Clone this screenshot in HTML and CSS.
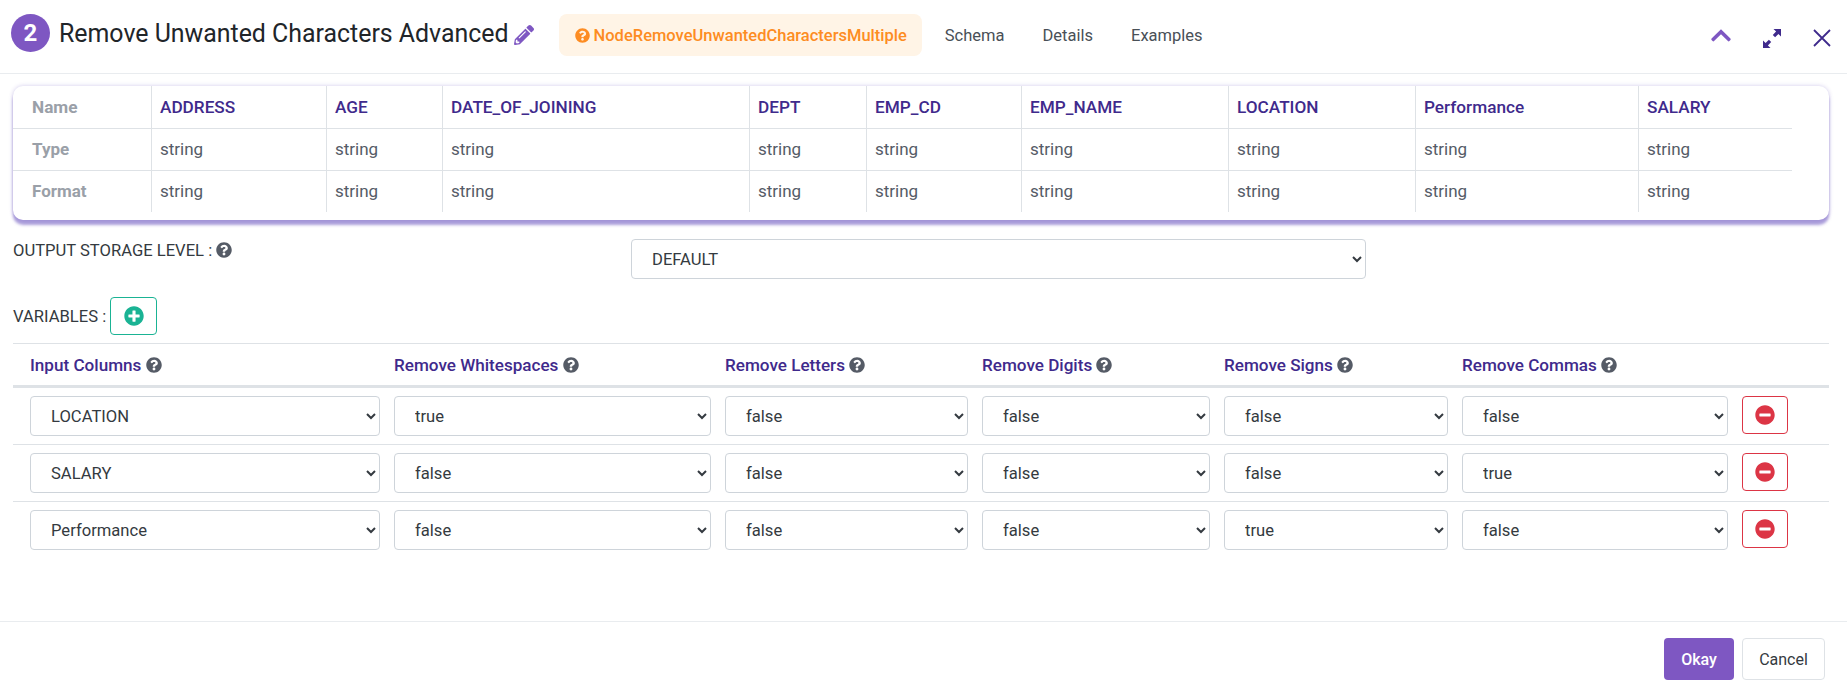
FILE: index.html
```html
<!DOCTYPE html>
<html>
<head>
  <meta charset="utf-8" />
  <title>Remove Unwanted Characters Advanced</title>
  <link rel="stylesheet" href="styles.css">
</head>
<body>
  <svg class="sprites" xmlns="http://www.w3.org/2000/svg">
    <symbol id="i-question" viewBox="0 0 512 512"><path d="M504 256c0 136.997-111.043 248-248 248S8 392.997 8 256C8 119.083 119.043 8 256 8s248 111.083 248 248zM262.655 90c-54.497 0-89.255 22.957-116.549 63.758-3.536 5.286-2.353 12.415 2.715 16.258l34.699 26.31c5.205 3.947 12.621 3.008 16.665-2.122 17.864-22.658 30.113-35.797 57.303-35.797 20.429 0 45.698 13.148 45.698 32.958 0 14.976-12.363 22.667-32.534 33.976C247.128 238.528 216 254.941 216 296v4c0 6.627 5.373 12 12 12h56c6.627 0 12-5.373 12-12v-1.333c0-28.462 83.186-29.647 83.186-106.667 0-58.002-60.165-102-116.531-102zM256 338c-25.365 0-46 20.635-46 46 0 25.364 20.635 46 46 46s46-20.636 46-46c0-25.365-20.635-46-46-46z"/></symbol>
    <symbol id="i-plus" viewBox="0 0 512 512"><path d="M256 8C119 8 8 119 8 256s111 248 248 248 248-111 248-248S393 8 256 8zm144 276c0 6.6-5.4 12-12 12h-92v92c0 6.6-5.4 12-12 12h-56c-6.6 0-12-5.4-12-12v-92h-92c-6.6 0-12-5.4-12-12v-56c0-6.6 5.4-12 12-12h92v-92c0-6.6 5.4-12 12-12h56c6.6 0 12 5.4 12 12v92h92c6.6 0 12 5.4 12 12v56z"/></symbol>
    <symbol id="i-minus" viewBox="0 0 512 512"><path d="M256 8C119 8 8 119 8 256s111 248 248 248 248-111 248-248S393 8 256 8zM124 296c-6.6 0-12-5.4-12-12v-56c0-6.6 5.4-12 12-12h264c6.6 0 12 5.4 12 12v56c0 6.6-5.4 12-12 12H124z"/></symbol>
  </svg>

  <div class="header">
    <span class="step">2</span>
    <h1 class="title">Remove Unwanted Characters Advanced</h1>
    <svg class="pencil" viewBox="0 0 512 512"><path d="M497.9 142.1l-46.1 46.1c-4.7 4.7-12.3 4.7-17 0l-111-111c-4.7-4.7-4.7-12.3 0-17l46.1-46.1c18.7-18.7 49.1-18.7 67.9 0l60.1 60.1c18.8 18.7 18.8 49.1 0 67.9zM284.2 99.8L21.6 362.4.4 483.9c-2.9 16.4 11.4 30.6 27.8 27.8l121.5-21.3 262.6-262.6c4.7-4.7 4.7-12.3 0-17l-111-111c-4.8-4.7-12.4-4.7-17.1 0zM124.1 339.9c-5.5-5.5-5.5-14.3 0-19.8l154-154c5.5-5.5 14.3-5.5 19.8 0s5.5 14.3 0 19.8l-154 154c-5.5 5.5-14.3 5.5-19.8 0zM88 424h48v36.3l-64.5 11.3-31.1-31.1L51.7 376H88v48z"/></svg>
    <div class="tabs">
      <a class="tab active"><svg class="help"><use href="#i-question"/></svg>NodeRemoveUnwantedCharactersMultiple</a>
      <a class="tab">Schema</a>
      <a class="tab">Details</a>
      <a class="tab">Examples</a>
    </div>
    <div class="window-actions">
      <svg class="chevron" viewBox="0 0 448 512"><path d="M240.971 130.524l194.343 194.343c9.373 9.373 9.373 24.569 0 33.941l-22.667 22.667c-9.357 9.357-24.522 9.375-33.901.04L224 227.495 69.255 381.516c-9.379 9.335-24.544 9.317-33.901-.04l-22.667-22.667c-9.373-9.373-9.373-24.569 0-33.941L207.03 130.525c9.372-9.373 24.568-9.373 33.941-.001z"/></svg>
      <svg class="expand" viewBox="0 0 18 19"><path d="M10.500 0H18v7.500l-2.600-2.600-3.300 3.300-2.300-2.300 3.300-3.300zM7.500 19H0v-7.500l2.600 2.600 3.300-3.300 2.300 2.300-3.300 3.300z"/></svg>
      <svg class="close" viewBox="0 0 18 18"><path d="M1 1l16 16M17 1L1 17"/></svg>
    </div>
  </div>

  <div class="content">
    <div class="schema-card">
      <table class="schema">
        <tr>
          <th class="c-label">Name</th><th class="c-address">ADDRESS</th><th class="c-age">AGE</th><th class="c-date">DATE_OF_JOINING</th><th class="c-dept">DEPT</th><th class="c-cd">EMP_CD</th><th class="c-name">EMP_NAME</th><th class="c-loc">LOCATION</th><th class="c-perf">Performance</th><th class="c-sal">SALARY</th>
        </tr>
        <tr>
          <th>Type</th><td>string</td><td>string</td><td>string</td><td>string</td><td>string</td><td>string</td><td>string</td><td>string</td><td>string</td>
        </tr>
        <tr>
          <th>Format</th><td>string</td><td>string</td><td>string</td><td>string</td><td>string</td><td>string</td><td>string</td><td>string</td><td>string</td>
        </tr>
      </table>
    </div>

    <div class="storage-row">
      <label class="storage-label">OUTPUT STORAGE LEVEL : <svg class="help"><use href="#i-question"/></svg></label>
      <select class="field storage-select"><option>DEFAULT</option></select>
    </div>

    <div class="variables-row">
      <span>VARIABLES :</span>
      <button class="icon-btn add"><svg><use href="#i-plus"/></svg></button>
    </div>

    <table class="variables">
      <colgroup>
        <col class="v-input"><col class="v-space"><col class="v-letters"><col class="v-digits"><col class="v-signs"><col class="v-commas"><col class="v-remove">
      </colgroup>
      <thead>
        <tr>
          <th>Input Columns <svg class="help"><use href="#i-question"/></svg></th>
          <th>Remove Whitespaces <svg class="help"><use href="#i-question"/></svg></th>
          <th>Remove Letters <svg class="help"><use href="#i-question"/></svg></th>
          <th>Remove Digits <svg class="help"><use href="#i-question"/></svg></th>
          <th>Remove Signs <svg class="help"><use href="#i-question"/></svg></th>
          <th>Remove Commas <svg class="help"><use href="#i-question"/></svg></th>
          <th></th>
        </tr>
      </thead>
      <tbody>
        <tr>
          <td><select class="field"><option>LOCATION</option></select></td>
          <td><select class="field"><option>true</option></select></td>
          <td><select class="field"><option>false</option></select></td>
          <td><select class="field"><option>false</option></select></td>
          <td><select class="field"><option>false</option></select></td>
          <td><select class="field"><option>false</option></select></td>
          <td><button class="icon-btn remove"><svg><use href="#i-minus"/></svg></button></td>
        </tr>
        <tr>
          <td><select class="field"><option>SALARY</option></select></td>
          <td><select class="field"><option>false</option></select></td>
          <td><select class="field"><option>false</option></select></td>
          <td><select class="field"><option>false</option></select></td>
          <td><select class="field"><option>false</option></select></td>
          <td><select class="field"><option>true</option></select></td>
          <td><button class="icon-btn remove"><svg><use href="#i-minus"/></svg></button></td>
        </tr>
        <tr>
          <td><select class="field"><option>Performance</option></select></td>
          <td><select class="field"><option>false</option></select></td>
          <td><select class="field"><option>false</option></select></td>
          <td><select class="field"><option>false</option></select></td>
          <td><select class="field"><option>true</option></select></td>
          <td><select class="field"><option>false</option></select></td>
          <td><button class="icon-btn remove"><svg><use href="#i-minus"/></svg></button></td>
        </tr>
      </tbody>
    </table>
  </div>

  <div class="footer">
    <button class="btn okay">Okay</button>
    <button class="btn cancel">Cancel</button>
  </div>
</body>
</html>
```

FILE: styles.css
```css
* {
  box-sizing: border-box;
}
body {
  display: flex;
  flex-direction: column;
  margin: 0;
  height: 690px;
  overflow: hidden;
  font-family: 'Roboto', sans-serif;
  font-size: 16.6px;
  background: #fff;
  color: #212529;
}
.sprites {
  display: none;
}
.help {
  width: 16px;
  height: 16px;
  fill: #555b66;
  vertical-align: -2px;
}

/* header */
.header {
  display: flex;
  align-items: center;
  flex: none;
  height: 74px;
  padding: 0 16px 3px 11px;
  border-bottom: 1px solid #e9ecef;
}
.step {
  display: flex;
  align-items: center;
  justify-content: center;
  width: 39px;
  height: 38px;
  margin: 0 9px 4px 0;
  border-radius: 50%;
  background: #7e57c2;
  color: #fff;
  font-size: 24px;
  font-weight: 700;
}
.title {
  margin: 0 5px 4px 0;
  font-size: 24.9px;
  font-weight: 400;
  color: #212529;
  white-space: nowrap;
}
.pencil {
  width: 20px;
  height: 20px;
  margin-bottom: 1px;
  fill: #7e57c2;
}
.tabs {
  display: flex;
  align-items: center;
  margin-left: 25px;
}
.tab {
  padding: 0 19px;
  color: #495057;
  font-size: 16.5px;
}
.tab.active {
  display: flex;
  align-items: center;
  gap: 4px;
  height: 42px;
  margin-right: 4px;
  padding: 0 15px 0 16px;
  border-radius: 8px;
  background: #fff4e6;
  color: #fd8c22;
  font-weight: 500;
}
.tab.active .help {
  width: 15px;
  height: 15px;
  fill: #fd8c22;
}
.window-actions {
  display: flex;
  align-items: center;
  margin-left: auto;
}
.chevron {
  width: 20px;
  height: 23px;
  margin-right: 32px;
  fill: #7e57c2;
}
.expand {
  width: 18px;
  height: 19px;
  margin: 6px 32px 0 0;
  fill: #3f2a8c;
}
.close {
  width: 18px;
  height: 18px;
  margin-top: 6px;
  fill: none;
  stroke: #3f2a8c;
  stroke-width: 1.8;
}

/* content */
.content {
  flex: 1;
  padding: 12px 18px 0 13px;
}
.schema-card {
  height: 134px;
  border-radius: 10px;
  background: #fff;
  box-shadow: 0 5px 3px rgba(103, 80, 190, 0.55), 0 0 4px rgba(103, 80, 190, 0.3);
}
.schema {
  width: 1779px;
  table-layout: fixed;
  border-collapse: separate;
  border-spacing: 0;
}
.schema th,
.schema td {
  height: 42px;
  padding: 0 8px 1px;
  text-align: left;
  font-size: 17px;
  border-bottom: 1px solid #dee2e6;
  border-right: 1px solid #dee2e6;
}
.schema tr:first-child th {
  height: 43px;
  padding-bottom: 0;
  font-size: 17.2px;
}
.schema tr:last-child th,
.schema tr:last-child td {
  height: 41px;
  border-bottom: none;
}
.schema tr > :last-child {
  border-right: none;
}
.schema th {
  font-weight: 500;
  color: #3f2a8c;
}
.schema tr > th:first-child {
  padding-left: 19px;
  color: #9aa0a8;
  font-weight: 700;
}
.schema td {
  color: #555b66;
}
.c-label { width: 139px; }
.c-address { width: 175px; }
.c-age { width: 116px; }
.c-date { width: 307px; }
.c-dept { width: 117px; }
.c-cd { width: 155px; }
.c-name { width: 207px; }
.c-loc { width: 187px; }
.c-perf { width: 223px; }
.c-sal { width: 153px; }

.storage-row {
  display: flex;
  align-items: flex-start;
  margin-top: 19px;
}
.storage-label {
  width: 618px;
  margin-top: 2px;
  color: #343a40;
}
.field {
  width: 100%;
  height: 40px;
  padding: 0 12px 0 16px;
  border: 1px solid #ced4da;
  border-radius: 4px;
  background: #fff;
  color: #343a40;
  font-family: inherit;
  font-size: 16.6px;
}
.storage-select {
  width: 735px;
}
.variables-row {
  display: flex;
  align-items: center;
  gap: 4px;
  margin-top: 18px;
  color: #343a40;
}
.icon-btn {
  display: flex;
  align-items: center;
  justify-content: center;
  padding: 0;
  border: 1px solid;
  border-radius: 4px;
  background: #fff;
}
.icon-btn svg {
  width: 20px;
  height: 20px;
}
.icon-btn.add {
  width: 47px;
  height: 38px;
  border-color: #1ab394;
  fill: #1ab394;
}
.icon-btn.remove {
  width: 46px;
  height: 38px;
  border-color: #dc3545;
  fill: #dc3545;
}
.variables {
  width: 1816px;
  margin-top: 8px;
  table-layout: fixed;
  border-collapse: separate;
  border-spacing: 0;
}
.variables th {
  height: 45px;
  padding: 0 7px;
  text-align: left;
  font-size: 17.1px;
  font-weight: 500;
  color: #3f2a8c;
  border-top: 1px solid #dee2e6;
  border-bottom: 3px solid #dee2e6;
}
.variables th:first-child,
.variables td:first-child {
  padding-left: 17px;
}
.variables td {
  height: 57px;
  padding: 8px 7px 0;
  vertical-align: top;
  border-bottom: 1px solid #dee2e6;
}
.variables tr:last-child td {
  border-bottom: none;
}
.v-input { width: 374px; }
.v-space { width: 331px; }
.v-letters { width: 257px; }
.v-digits { width: 242px; }
.v-signs { width: 238px; }
.v-commas { width: 280px; }
.v-remove { width: 94px; }

/* footer */
.footer {
  display: flex;
  flex: none;
  justify-content: flex-end;
  gap: 8px;
  height: 69px;
  padding: 16px 22px 0 0;
  border-top: 1px solid #e9ecef;
}
.btn {
  height: 42px;
  border-radius: 4px;
  font-family: inherit;
  font-size: 16px;
}
.okay {
  width: 70px;
  border: none;
  background: #7e57c2;
  color: #fff;
  font-weight: 500;
}
.cancel {
  width: 83px;
  border: 1px solid #dee2e6;
  background: #fff;
  color: #343a40;
}
```
